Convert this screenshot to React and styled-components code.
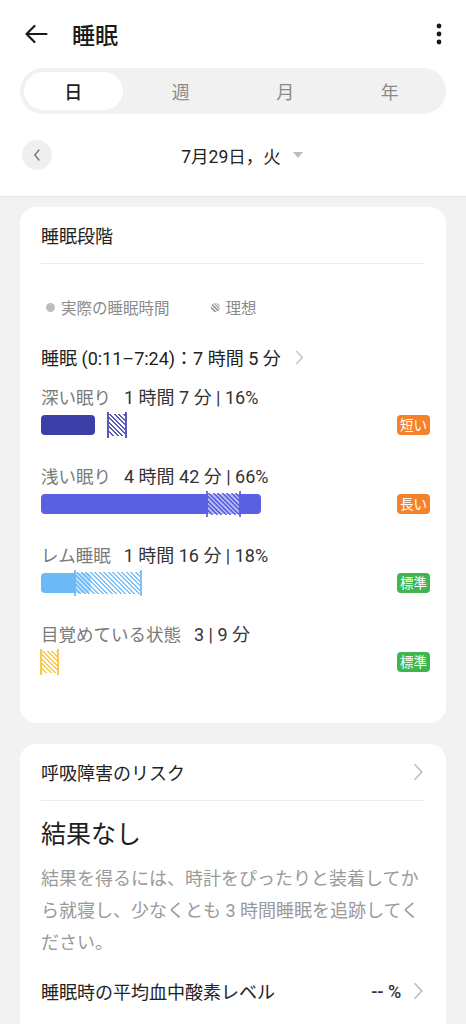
import React from 'react';
import styled, { createGlobalStyle } from 'styled-components';

const GlobalStyle = createGlobalStyle`
  body {
    margin: 0;
    background: #f2f2f2;
    font-family: Roboto, "Noto Sans CJK JP", "Noto Sans", sans-serif;
    color: #222;
  }
`;

const Page = styled.div`
  width: 466px;
  min-height: 1024px;
  background: #f2f2f2;
`;

const Top = styled.div`
  background: #fff;
  border-bottom: 1px solid #e4e4e4;
`;

const Header = styled.div`
  height: 64px;
  padding: 2px 24px 2px 24px;
  display: flex;
  align-items: center;
`;

const Title = styled.h1`
  margin: 0 0 0 24px;
  flex: 1;
  font-size: 23px;
  font-weight: 500;
  color: #1a1a1a;
`;

const IconBtn = styled.div`
  display: flex;
  align-items: center;
  justify-content: center;
  color: #1a1a1a;
`;

const Segmented = styled.div`
  margin: 0 20px;
  height: 46px;
  border-radius: 23px;
  background: #f1f1f1;
  padding: 4px;
  box-sizing: border-box;
  display: grid;
  grid-template-columns: repeat(4, 1fr);
`;

const Seg = styled.div`
  display: flex;
  align-items: center;
  justify-content: center;
  border-radius: 19px;
  margin-right: ${p => (p.$active ? '6px' : '0')};
  background: ${p => (p.$active ? '#fff' : 'transparent')};
  color: ${p => (p.$active ? '#1e1e1e' : '#8a8a8a')};
  font-size: 18px;
  font-weight: ${p => (p.$active ? 500 : 400)};
`;

const DateRow = styled.div`
  height: 82px;
  padding: 0 22px;
  display: grid;
  grid-template-columns: 30px 1fr 30px;
  align-items: center;
`;

const RoundBtn = styled.div`
  width: 30px;
  height: 30px;
  border-radius: 50%;
  background: #efefef;
  display: flex;
  align-items: center;
  justify-content: center;
  color: #777;
`;

const DateLabel = styled.div`
  display: flex;
  align-items: center;
  justify-content: center;
  gap: 12px;
  padding-left: 18px;
  font-size: 17.5px;
  color: #222;
`;

const Caret = styled.span`
  width: 0;
  height: 0;
  border-left: 5px solid transparent;
  border-right: 5px solid transparent;
  border-top: 6px solid #bdbdbd;
`;

const Content = styled.div`
  padding: 10px 20px 0;
  display: flex;
  flex-direction: column;
  gap: 21px;
`;

const Card = styled.div`
  background: #fff;
  border-radius: 16px;
  padding: 0 22px ${p => p.$pb || '0'} 21px;
`;

const CardHead = styled.div`
  height: 56px;
  display: flex;
  align-items: center;
  justify-content: space-between;
  border-bottom: 1px solid #ececec;
  font-size: 18px;
  color: #222;
`;

const Legend = styled.div`
  margin-top: 31px;
  height: 24px;
  display: flex;
  align-items: center;
  gap: 41px;
  padding-left: 5px;
  font-size: 15.5px;
  color: #8b8b8b;
`;

const LegendItem = styled.span`
  display: flex;
  align-items: center;
  gap: 6px;
`;

const Dot = styled.span`
  width: 9px;
  height: 9px;
  border-radius: 50%;
  background: ${p => (p.$hatched
    ? 'repeating-linear-gradient(45deg, #9a9a9a 0 1.3px, #e2e2e2 1.3px 2.6px)'
    : '#bdbdbd')};
`;

const Summary = styled.div`
  margin-top: 25px;
  height: 26px;
  display: flex;
  align-items: center;
  gap: 14px;
  font-size: 18px;
  color: #222;
`;

const Stage = styled.div`
  margin-top: ${p => (p.$first ? '14px' : '25px')};
`;

const StageLabel = styled.div`
  height: 24px;
  display: flex;
  align-items: center;
  gap: 13px;
`;

const StageName = styled.span`
  font-size: 17.5px;
  color: #7a7a7a;
`;

const StageValue = styled.span`
  font-size: 18px;
  color: #333;
`;

const BarRow = styled.div`
  margin-top: 4px;
  height: 26px;
  display: flex;
  align-items: center;
  justify-content: space-between;
`;

const Track = styled.div`
  position: relative;
  height: 26px;
  flex: 1;
  display: flex;
  align-items: center;
`;

const Solid = styled.div`
  height: 20px;
  border-radius: 4px;
  background: ${p => p.$color};
`;

const Ideal = styled.div`
  position: absolute;
  top: 2px;
  bottom: 2px;
  background: repeating-linear-gradient(
    45deg,
    ${p => p.$color} 0 1.4px,
    rgba(255, 255, 255, 0.62) 1.4px 3.2px
  );
  opacity: 0.85;
  &::before,
  &::after {
    content: '';
    position: absolute;
    top: -2px;
    bottom: -2px;
    width: 2px;
    background: ${p => p.$color};
  }
  &::before { left: -1px; }
  &::after { right: -1px; }
`;

const Badge = styled.span`
  margin-right: -6px;
  height: 20px;
  padding: 0 3px;
  border-radius: 4px;
  background: ${p => p.$color};
  color: #fff;
  font-size: 13.5px;
  line-height: 20px;
`;

const Chevron = ({ size = 16, color = '#bcbcbc' }) => (
  <svg width={size * 0.6} height={size} viewBox="0 0 9 16" fill="none">
    <path d="M1.5 1.5 L7.5 8 L1.5 14.5" stroke={color} strokeWidth="1.4" strokeLinecap="round" strokeLinejoin="round" />
  </svg>
);

const NoResult = styled.div`
  margin-top: 18px;
  font-size: 25px;
  color: #1e1e1e;
  line-height: 32px;
`;

const Hint = styled.p`
  margin: 12px 0 0;
  font-size: 18px;
  line-height: 32px;
  color: #9a9a9a;
`;

const MetricRow = styled.div`
  margin-top: 2px;
  height: 60px;
  display: flex;
  align-items: center;
  justify-content: space-between;
  font-size: 18px;
  color: #222;
`;

const MetricValue = styled.span`
  display: flex;
  align-items: center;
  gap: 12px;
  font-weight: 500;
  color: #333;
`;

const stages = [
  { name: '深い眠り', value: '1 時間 7 分 | 16%', color: '#3b3fa7', solid: 54, ideal: [67, 18], badge: '短い', badgeColor: '#f5822b' },
  { name: '浅い眠り', value: '4 時間 42 分 | 66%', color: '#5b5fe2', solid: 220, ideal: [166, 33], badge: '長い', badgeColor: '#f5822b' },
  { name: 'レム睡眠', value: '1 時間 16 分 | 18%', color: '#6bb9f7', solid: 50, ideal: [34, 66], badge: '標準', badgeColor: '#3db64f' },
  { name: '目覚めている状態', value: '3 | 9 分', color: '#f6c234', solid: 0, ideal: [0, 17], badge: '標準', badgeColor: '#3db64f' },
];

export default function App() {
  return (
    <Page>
      <GlobalStyle />
      <Top>
        <Header>
          <IconBtn>
            <svg width="24" height="20" viewBox="0 0 24 20" fill="none">
              <path d="M22.5 10 H2.5 M10.5 2 L2.5 10 L10.5 18" stroke="#1a1a1a" strokeWidth="2.2" strokeLinecap="round" strokeLinejoin="round" />
            </svg>
          </IconBtn>
          <Title>睡眠</Title>
          <IconBtn>
            <svg width="6" height="22" viewBox="0 0 6 22">
              <circle cx="3" cy="3" r="2.4" fill="#1a1a1a" />
              <circle cx="3" cy="11" r="2.4" fill="#1a1a1a" />
              <circle cx="3" cy="19" r="2.4" fill="#1a1a1a" />
            </svg>
          </IconBtn>
        </Header>
        <Segmented>
          <Seg $active>日</Seg>
          <Seg>週</Seg>
          <Seg>月</Seg>
          <Seg>年</Seg>
        </Segmented>
        <DateRow>
          <RoundBtn>
            <svg width="8" height="12" viewBox="0 0 8 12" fill="none">
              <path d="M6 1 L1.8 6 L6 11" stroke="#777" strokeWidth="1.4" strokeLinecap="round" strokeLinejoin="round" />
            </svg>
          </RoundBtn>
          <DateLabel>
            7月29日，火
            <Caret />
          </DateLabel>
          <span />
        </DateRow>
      </Top>

      <Content>
        <Card $pb="48px">
          <CardHead>睡眠段階</CardHead>
          <Legend>
            <LegendItem><Dot />実際の睡眠時間</LegendItem>
            <LegendItem><Dot $hatched />理想</LegendItem>
          </Legend>
          <Summary>
            睡眠 (0:11–7:24)：7 時間 5 分
            <Chevron size={15} />
          </Summary>
          {stages.map((s, i) => (
            <Stage key={s.name} $first={i === 0}>
              <StageLabel>
                <StageName>{s.name}</StageName>
                <StageValue>{s.value}</StageValue>
              </StageLabel>
              <BarRow>
                <Track>
                  {s.solid > 0 && <Solid $color={s.color} style={{ width: s.solid }} />}
                  <Ideal $color={s.color} style={{ left: s.ideal[0], width: s.ideal[1] }} />
                </Track>
                <Badge $color={s.badgeColor}>{s.badge}</Badge>
              </BarRow>
            </Stage>
          ))}
        </Card>

        <Card $pb="40px">
          <CardHead>
            呼吸障害のリスク
            <Chevron size={18} />
          </CardHead>
          <NoResult>結果なし</NoResult>
          <Hint>結果を得るには、時計をぴったりと装着してから就寝し、少なくとも 3 時間睡眠を追跡してください。</Hint>
          <MetricRow>
            睡眠時の平均血中酸素レベル
            <MetricValue>
              -- %
              <Chevron size={18} />
            </MetricValue>
          </MetricRow>
        </Card>
      </Content>
    </Page>
  );
}
